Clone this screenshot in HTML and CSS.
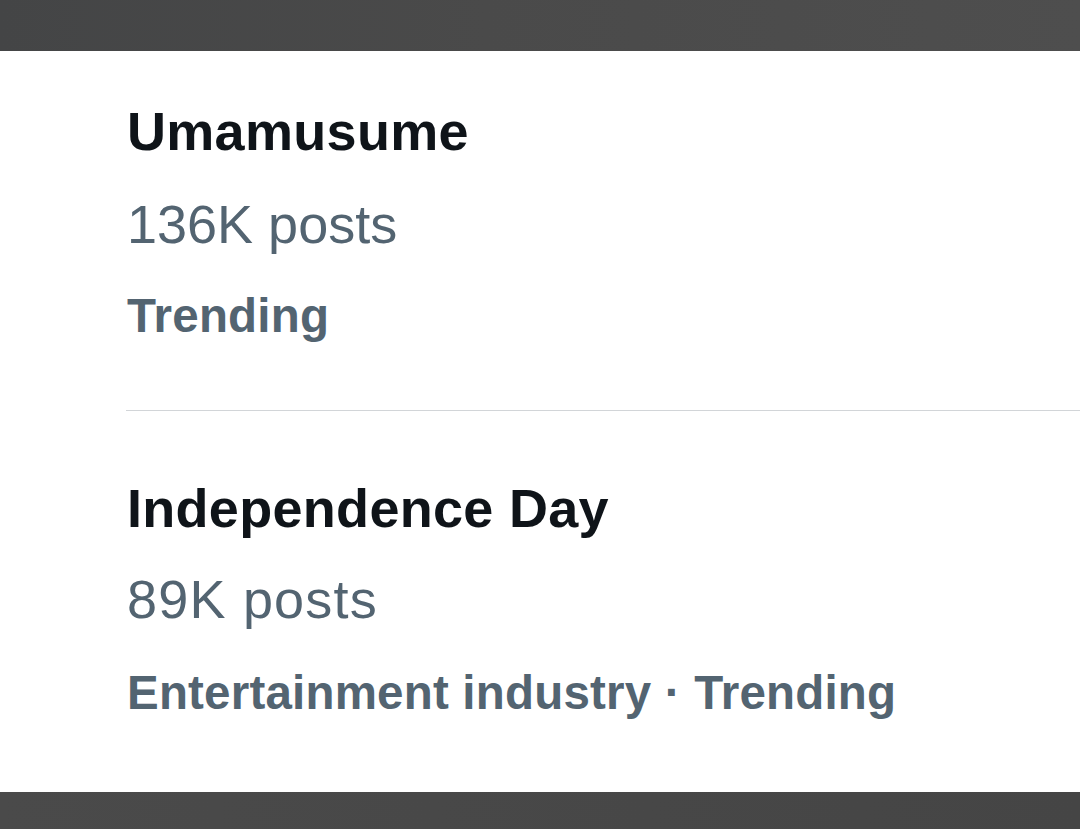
FILE: index.html
```html
<!DOCTYPE html>
<html lang="en">
<head>
<meta charset="utf-8">
<title>Trends</title>
<link rel="stylesheet" href="styles.css">
</head>
<body>
<div class="bar bar-top"></div>
<main class="trends">
  <section class="trend trend-first">
    <div class="trend-title">Umamusume</div>
    <div class="trend-count">136K posts</div>
    <div class="trend-meta">Trending</div>
  </section>
  <div class="divider"></div>
  <section class="trend trend-second">
    <div class="trend-title">Independence Day</div>
    <div class="trend-count count-second">89K posts</div>
    <div class="trend-meta meta-second">Entertainment industry · Trending</div>
  </section>
</main>
<div class="bar bar-bottom"></div>
</body>
</html>
```

FILE: styles.css
```css
html, body {
  margin: 0;
  padding: 0;
  background: #ffffff;
}

body {
  width: 1080px;
  height: 829px;
  overflow: hidden;
  display: flex;
  flex-direction: column;
  font-family: "Liberation Sans", Arial, sans-serif;
}

.bar {
  flex: none;
}

.bar-top {
  height: 51px;
  background: linear-gradient(90deg, #444546 0%, #4a4a4a 45%, #4e4e4e 100%);
}

.bar-bottom {
  height: 37px;
  background: linear-gradient(90deg, #4a4a4a 0%, #474747 60%, #454545 100%);
}

.trends {
  flex: 1;
  display: flex;
  flex-direction: column;
}

.trend {
  padding-left: 127px;
  display: flex;
  flex-direction: column;
}

.trend-first {
  padding-top: 50px;
  padding-bottom: 66px;
}

.trend-second {
  padding-top: 67px;
}

.trend-title {
  font-size: 54px;
  line-height: 60px;
  font-weight: 700;
  color: #0f1419;
  letter-spacing: 0.3px;
}

.trend-count {
  margin-top: 33px;
  font-size: 54px;
  line-height: 60px;
  font-weight: 400;
  color: #536471;
}

.count-second {
  margin-top: 31px;
  letter-spacing: 1.2px;
}

.trend-meta {
  margin-top: 34px;
  font-size: 47.5px;
  line-height: 56px;
  font-weight: 700;
  color: #536471;
  letter-spacing: 0.2px;
}

.meta-second {
  margin-top: 36px;
}

.divider {
  height: 1px;
  margin-left: 126px;
  background: #d2d5d8;
}
```
